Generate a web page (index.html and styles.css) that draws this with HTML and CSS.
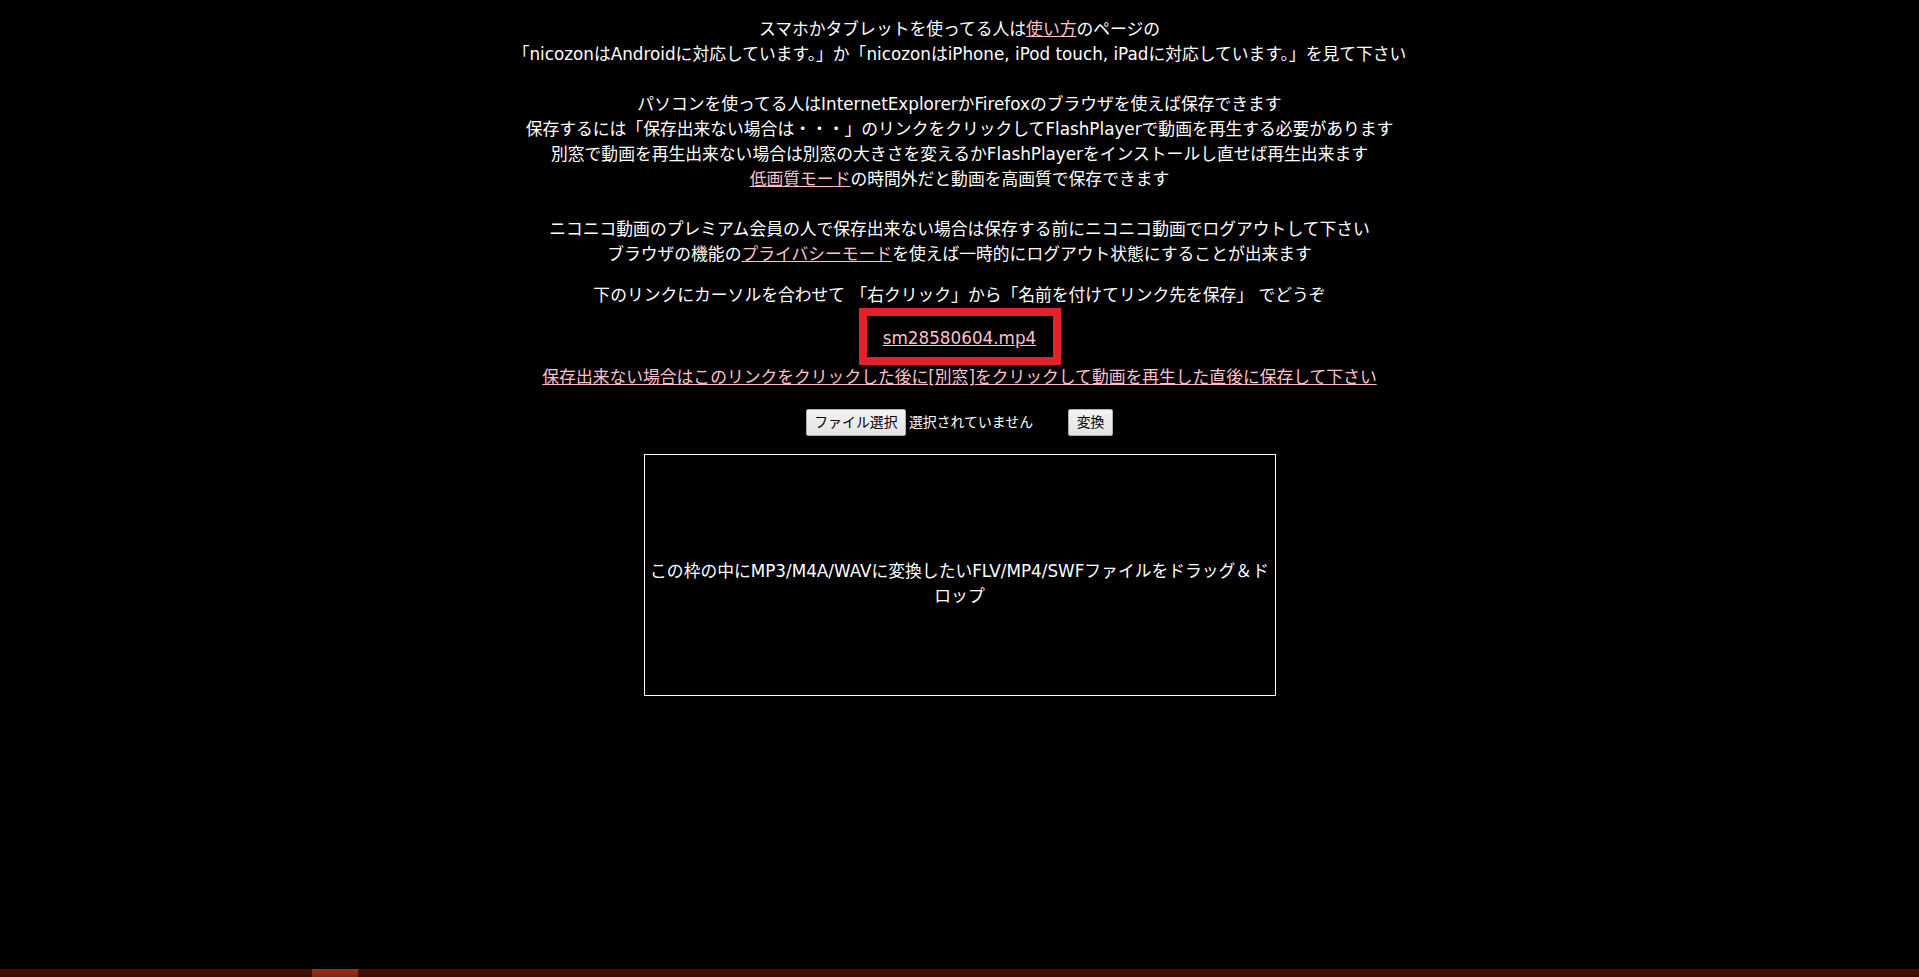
FILE: index.html
```html
<!DOCTYPE html>
<html lang="ja">
<head>
    <meta charset="UTF-8">
    <meta name="viewport" content="width=device-width, initial-scale=1.0">
    <title>nicozon 保存</title>
    <link rel="stylesheet" href="styles.css">
</head>
<body>
    <main class="page">
        <p class="notes">
            スマホかタブレットを使ってる人は<a href="#">使い方</a>のページの<br>
            「nicozonはAndroidに対応しています。」か「nicozonはiPhone, iPod touch, iPadに対応しています。」を見て下さい<br>
            <br>
            パソコンを使ってる人はInternetExplorerかFirefoxのブラウザを使えば保存できます<br>
            保存するには「保存出来ない場合は・・・」のリンクをクリックしてFlashPlayerで動画を再生する必要があります<br>
            別窓で動画を再生出来ない場合は別窓の大きさを変えるかFlashPlayerをインストールし直せば再生出来ます<br>
            <a href="#">低画質モード</a>の時間外だと動画を高画質で保存できます<br>
            <br>
            ニコニコ動画のプレミアム会員の人で保存出来ない場合は保存する前にニコニコ動画でログアウトして下さい<br>
            ブラウザの機能の<a href="#">プライバシーモード</a>を使えば一時的にログアウト状態にすることが出来ます
        </p>

        <p class="howto">下のリンクにカーソルを合わせて 「右クリック」から「名前を付けてリンク先を保存」 でどうぞ</p>

        <div class="save-box">
            <a href="#" class="save-link">sm28580604.mp4</a>
        </div>

        <p class="fallback"><a href="#">保存出来ない場合はこのリンクをクリックした後に[別窓]をクリックして動画を再生した直後に保存して下さい</a></p>

        <form class="convert-form" onsubmit="return false">
            <label class="file-pick">
                <span class="btn">ファイル選択</span>
                <span class="file-name">選択されていません</span>
            </label>
            <button type="submit" class="btn convert-btn">変換</button>
        </form>

        <div class="dropzone">
            <span>この枠の中にMP3/M4A/WAVに変換したいFLV/MP4/SWFファイルをドラッグ＆ドロップ</span>
        </div>
    </main>
    <div class="taskbar-edge">
        <span class="edge-lit"></span>
    </div>
</body>
</html>
```

FILE: styles.css
```css
:root {
    --bg-color: #000000;
    --text-color: #ffffff;
    --link-color: #ffc0cb;
    --frame-red: #e2212b;
}

html, body {
    height: 100%;
}

body {
    margin: 0;
    background-color: var(--bg-color);
    color: var(--text-color);
    font-family: "DejaVu Sans", "Noto Sans CJK JP", sans-serif;
    font-size: 16.8px;
    line-height: 25px;
    display: flex;
    flex-direction: column;
}

.page {
    flex: 1;
    display: flex;
    flex-direction: column;
    align-items: center;
    text-align: center;
    padding-top: 16.5px;
}

a {
    color: var(--link-color);
    text-decoration: underline;
}

p {
    margin: 0;
}

.howto {
    margin-top: 16.5px;
}

.save-box {
    flex-shrink: 0;
    border: 8px solid var(--frame-red);
    width: 186px;
    height: 41px;
    display: flex;
    align-items: center;
    justify-content: center;
}

.save-link {
    padding-top: 4px;
}

.fallback {
    margin-bottom: 19px;
}

.convert-form {
    display: flex;
    align-items: center;
    height: 27px;
    margin: 0 0 18px;
}

.file-pick {
    display: flex;
    align-items: center;
    gap: 3px;
    cursor: pointer;
}

.btn {
    box-sizing: border-box;
    height: 27px;
    display: inline-flex;
    align-items: center;
    justify-content: center;
    padding: 0 7px;
    border: 1px solid #acacac;
    border-radius: 2px;
    background: linear-gradient(#f3f3f3, #e3e3e3);
    color: #000;
    font-family: inherit;
    font-size: 13.9px;
    line-height: 1;
}

.file-pick .btn {
    width: 100px;
}

.file-name {
    font-size: 13.9px;
    color: var(--text-color);
}

.convert-btn {
    width: 45px;
    margin-left: 35px;
    cursor: pointer;
}

.dropzone {
    flex-shrink: 0;
    width: 630px;
    height: 223px;
    padding-top: 17px;
    border: 1px solid #ffffff;
    display: flex;
    align-items: center;
    justify-content: center;
}

.taskbar-edge {
    height: 8px;
    background: linear-gradient(#4a1204, #360b02);
    display: flex;
}

.edge-lit {
    width: 46px;
    margin-left: 312px;
    background: linear-gradient(#9a3318, #7c2611);
}
```
